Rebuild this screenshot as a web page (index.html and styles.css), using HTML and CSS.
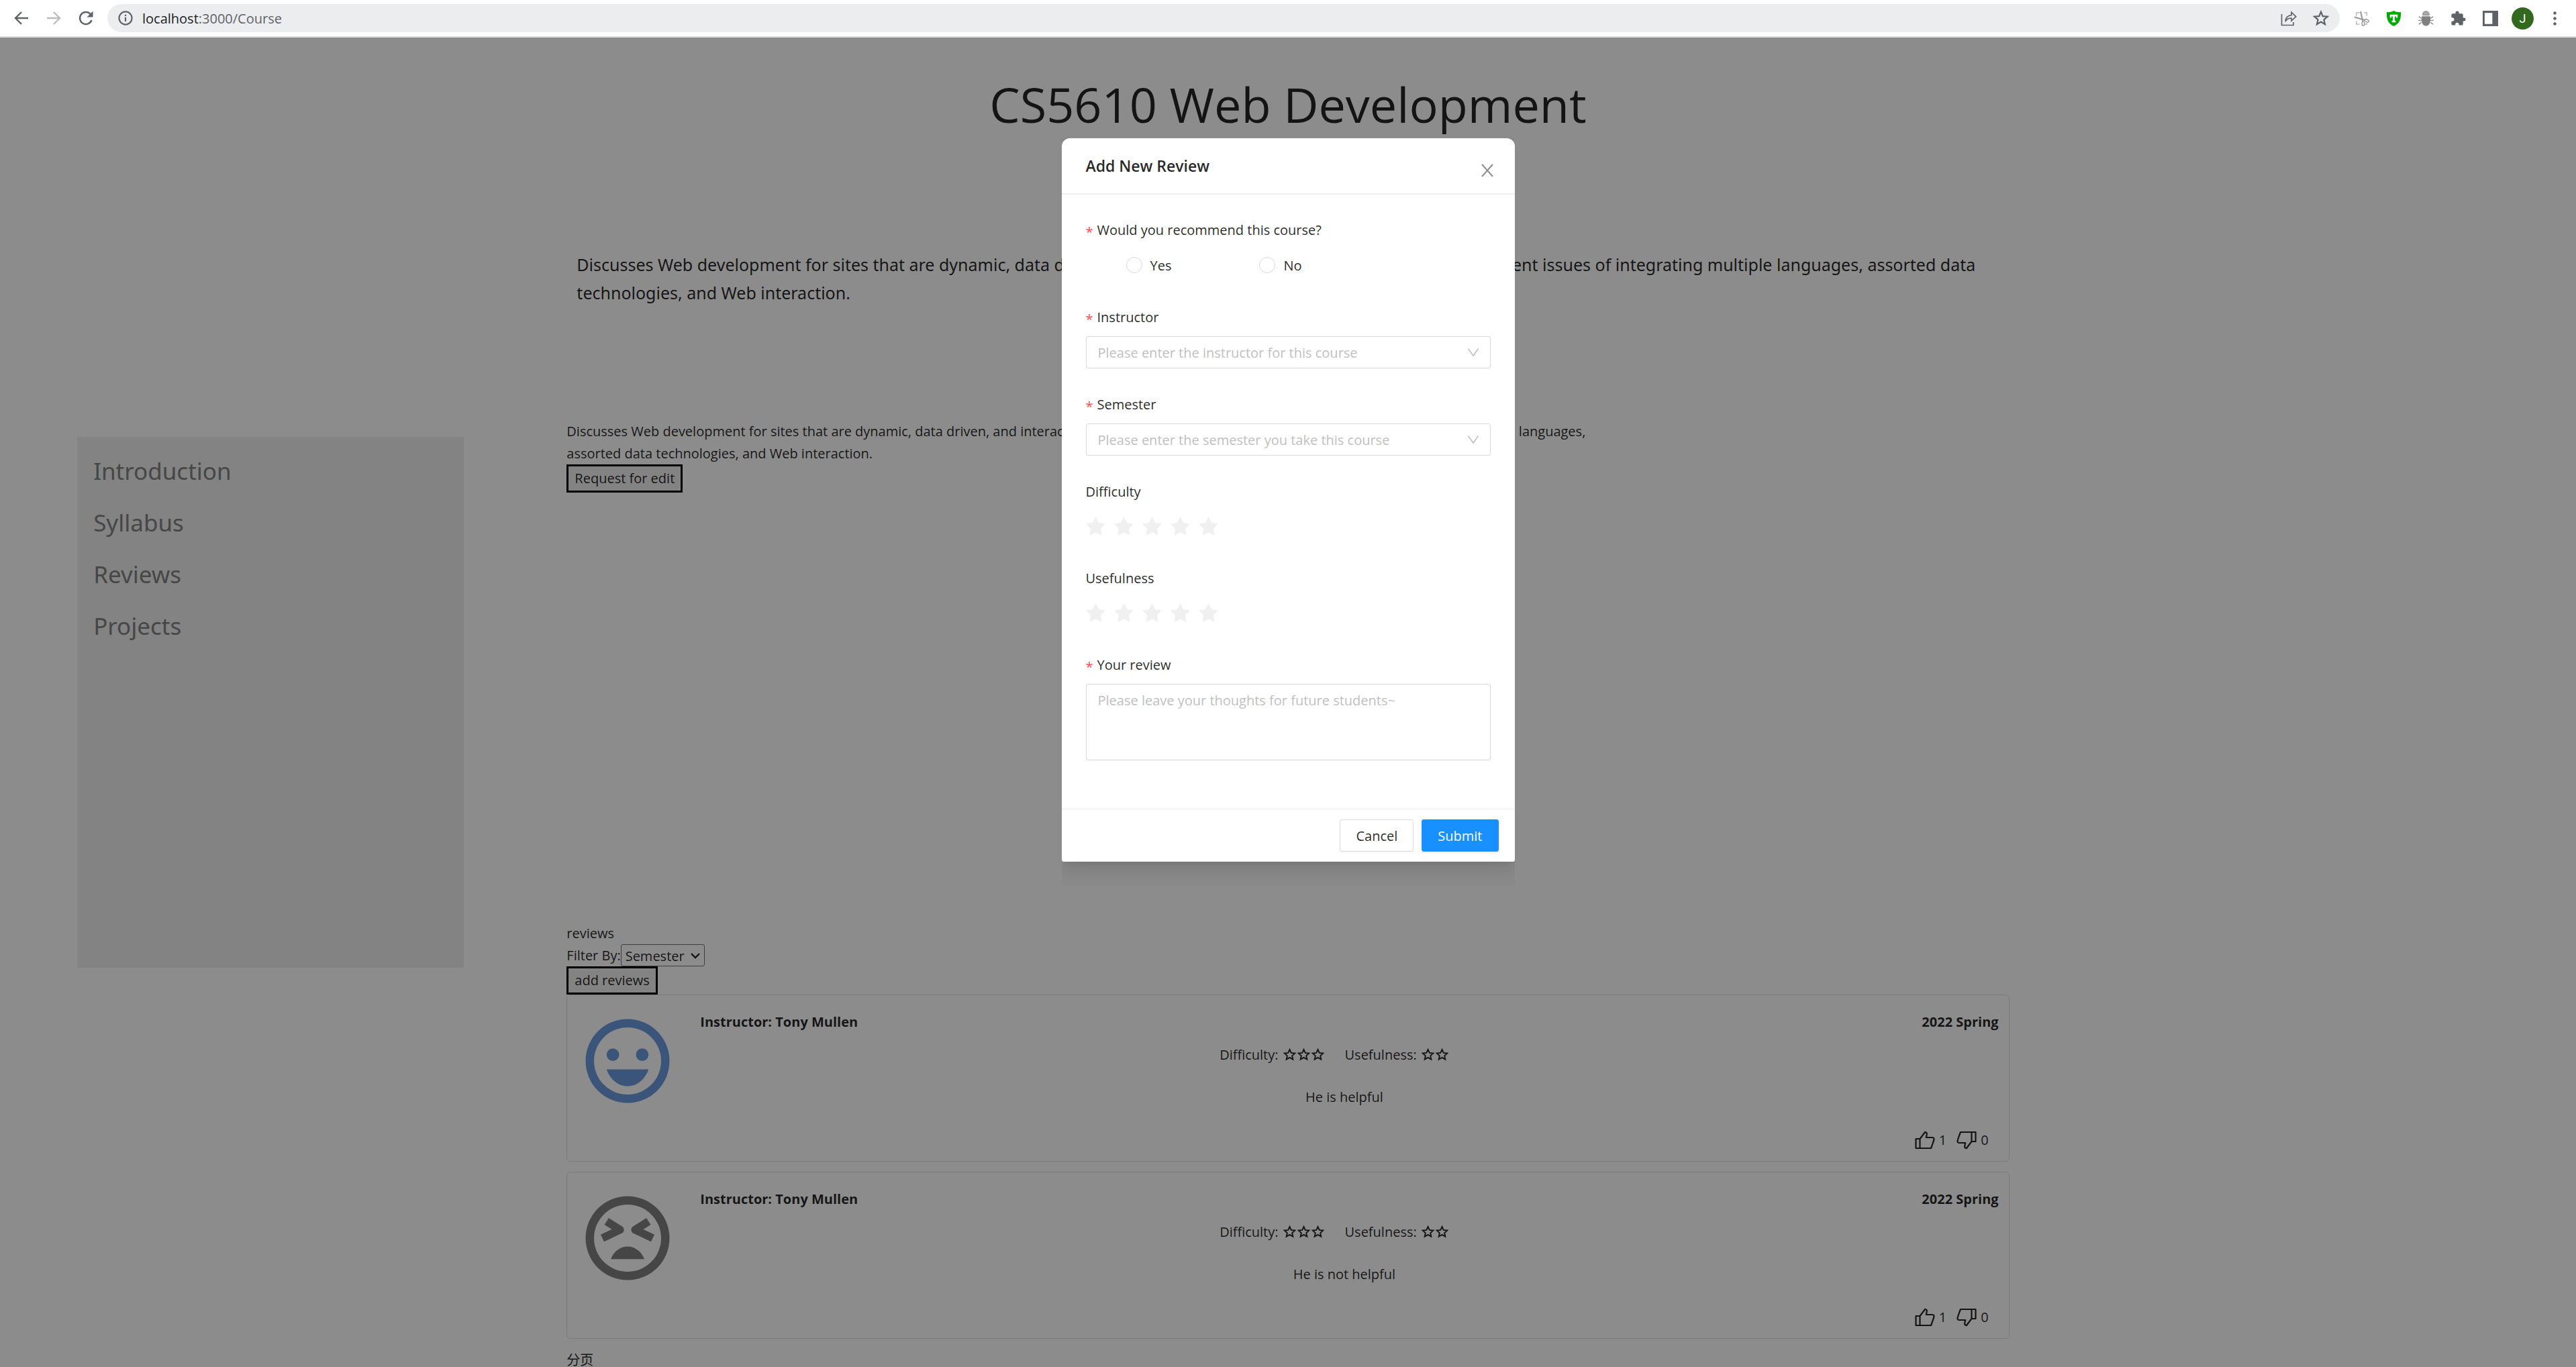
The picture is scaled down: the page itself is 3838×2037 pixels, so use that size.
FILE: index.html
```html
<!DOCTYPE html>
<html lang="en">
<head>
<meta charset="utf-8">
<meta name="viewport" content="width=device-width, initial-scale=1">
<title>CS5610 Web Development</title>
<link rel="stylesheet" href="styles.css">
</head>
<body>
<svg class="defs" aria-hidden="true">
  <symbol id="star-outline" viewBox="0 0 24 24"><path d="M12 3.4l2.6 5.7 6.2.7-4.6 4.2 1.3 6.1-5.5-3.1-5.5 3.1 1.3-6.1-4.6-4.2 6.2-.7z" fill="none" stroke="currentColor" stroke-width="2.2"/></symbol>
  <symbol id="thumb" viewBox="0 0 30 28"><path d="M1.5 12h6v14h-6zM7.500 12L14 3.500c.4-1 .8-1.800 1.700-1.500 1.700.5 2.400 1.500 2.100 3L16.800 10H26c1.700 0 2.700 1 2.500 2.500-.4 3-1.700 6-3 9.500L24 26H7.500" fill="none" stroke="currentColor" stroke-width="2.200" stroke-linejoin="round"/></symbol>
  <symbol id="chevron" viewBox="0 0 18 14"><path d="M1.500 1.500L9 12l7.500-10.500" fill="none" stroke="currentColor" stroke-width="1.600"/></symbol>
</svg>
<div class="window">
  <header class="toolbar">
    <div class="nav">
      <button type="button" class="tool" aria-label="Back"><svg viewBox="0 0 24 24"><path d="M22 12H3M12 3l-9 9 9 9" fill="none" stroke="currentColor" stroke-width="2.400"/></svg></button>
      <button type="button" class="tool off" aria-label="Forward"><svg viewBox="0 0 24 24"><path d="M2 12h19M12 3l9 9-9 9" fill="none" stroke="currentColor" stroke-width="2.400"/></svg></button>
      <button type="button" class="tool" aria-label="Reload"><svg viewBox="0 0 24 24"><path d="M20.500 15A9 9 0 1 1 18.500 5.800" fill="none" stroke="currentColor" stroke-width="2.400"/><path d="M22.500 1.500v9h-9z" fill="currentColor"/></svg></button>
    </div>
    <div class="address">
      <svg class="info" viewBox="0 0 24 24"><circle cx="12" cy="12" r="10.400" fill="none" stroke="currentColor" stroke-width="2.400"/><path d="M12 10.500v7M12 6.200v2.600" stroke="currentColor" stroke-width="2.400"/></svg>
      <span class="url">localhost<span class="path">:3000/Course</span></span>
      <button type="button" class="tool" aria-label="Share"><svg viewBox="0 0 24 24"><path d="M1.500 6v16.500H19V18M7 17c.4-6 3.500-9 9-9.400V3.200l6.800 6.600L16 16v-4c-4 0-7 1.500-9 5z" fill="none" stroke="currentColor" stroke-width="1.700"/></svg></button>
      <button type="button" class="tool" aria-label="Bookmark"><svg viewBox="0 0 24 24"><path d="M12 2.600l2.700 6.500 7 .6-5.300 4.600 1.600 6.900-6-3.700-6 3.700 1.600-6.900-5.300-4.600 7-.6z" fill="none" stroke="currentColor" stroke-width="2.200"/></svg></button>
    </div>
    <div class="extensions">
      <button type="button" class="tool" aria-label="Screen capture"><svg viewBox="0 0 24 24"><path d="M4 8V3h5M16 3h4v5M4 16v5h5M20 19v2h-3" fill="none" stroke="#c4c4c4" stroke-width="1.800"/><path d="M1 10l16 4.500M10.500 1L14 17" stroke="#999" stroke-width="2.200"/><ellipse cx="20" cy="15.500" rx="3.400" ry="2" transform="rotate(25 20 15.500)" fill="none" stroke="#999" stroke-width="1.500"/><ellipse cx="14.500" cy="20" rx="2" ry="3.200" fill="none" stroke="#999" stroke-width="1.500"/></svg></button>
      <button type="button" class="tool" aria-label="Shield"><svg viewBox="0 0 24 24"><path d="M12 0c3 1.800 6.500 2.400 11 2.200.4 9.800-1.500 17.800-11 21.800C2.500 20 .6 12 1 2.200 5.500 2.400 9 1.800 12 0z" fill="#0a0"/><path d="M6 6h12v5h-2.500V8.800h-2v6.700H15V18H9v-2.500h1.500V8.800h-2V11H6z" fill="#fff"/></svg></button>
      <button type="button" class="tool" aria-label="Debugger"><svg viewBox="0 0 24 24"><path d="M1 9l4 3M23 9l-4 3M0 15h24M1 21l4-3M23 21l-4-3" stroke="#8a8a8a" stroke-width="1.500"/><path d="M5.500 8.500h13c1.200 8-.5 15-6.500 15s-7.700-7-6.500-15z" fill="#808080"/><path d="M7 6.800C6.600 2.800 9 .8 12 .8s5.400 2 5 6z" fill="#aaa" stroke="#808080"/></svg></button>
      <button type="button" class="tool" aria-label="Extensions"><svg viewBox="0 0 24 24"><path d="M21 11h-1.500V6.500c0-1.100-.9-2-2-2h-4.300V3.200a2.700 2.700 0 0 0-5.400 0v1.300H3.500c-1.100 0-2 .9-2 2v4.100h1.300a2.900 2.900 0 0 1 0 5.800H1.500v4.100c0 1.100.9 2 2 2h4v-1.300a2.800 2.800 0 0 1 5.600 0v1.300h4.400c1.100 0 2-.9 2-2v-4.300H21a2.600 2.600 0 0 0 0-5.200z" fill="currentColor"/></svg></button>
      <button type="button" class="tool" aria-label="Side panel"><svg viewBox="0 0 24 24"><path d="M0 0h24v24H0zM3 3.500v17h12v-17z" fill="currentColor" fill-rule="evenodd"/></svg></button>
      <button type="button" class="avatar" aria-label="Profile">J</button>
      <button type="button" class="tool" aria-label="Menu"><svg viewBox="0 0 24 24"><circle cx="12" cy="3.600" r="2.400" fill="currentColor"/><circle cx="12" cy="12" r="2.400" fill="currentColor"/><circle cx="12" cy="20.400" r="2.400" fill="currentColor"/></svg></button>
    </div>
  </header>

  <div class="viewport">
    <div class="page">
      <h1 class="course-title">CS5610 Web Development</h1>
      <p class="course-lead">Discusses Web development for sites that are dynamic, data driven, and interactive. Focuses on the software development issues of integrating multiple languages, assorted data technologies, and Web interaction.</p>
      <div class="layout">
        <nav class="sidebar">
          <a href="#introduction">Introduction</a>
          <a href="#syllabus">Syllabus</a>
          <a href="#reviews">Reviews</a>
          <a href="#projects">Projects</a>
        </nav>
        <main>
          <section class="intro" id="introduction">
            <p>Discusses Web development for sites that are dynamic, data driven, and interactive. Focuses on the software development issues of integrating multiple languages, assorted data technologies, and Web interaction.</p>
            <button type="button" class="plain-button">Request for edit</button>
          </section>
          <section id="reviews">
            <p>reviews</p>
            <div class="filter">
              <label for="filter">Filter By:</label>
              <span class="filter-box">
                <select id="filter"><option>Semester</option></select>
                <svg viewBox="0 0 16 10"><path d="M2 2l6 6 6-6" fill="none" stroke="currentColor" stroke-width="2.400"/></svg>
              </span>
            </div>
            <button type="button" class="plain-button">add reviews</button>
            <article class="review">
              <svg class="face happy" viewBox="0 0 24 24" fill="currentColor"><path d="M12 2a10 10 0 1 0 0 20 10 10 0 0 0 0-20zm0 18a8 8 0 1 1 0-16 8 8 0 0 1 0 16z"/><circle cx="8.500" cy="10.500" r="1.500"/><circle cx="15.500" cy="10.500" r="1.500"/><path d="M7 14h10c-.8 2.340-2.700 4-5 4s-4.200-1.660-5-4z"/></svg>
              <div class="review-body">
                <div class="review-head"><strong>Instructor: Tony Mullen</strong><strong>2022 Spring</strong></div>
                <div class="scores">
                  <span class="score">Difficulty: <span class="stars"><svg><use href="#star-outline"/></svg><svg><use href="#star-outline"/></svg><svg><use href="#star-outline"/></svg></span></span>
                  <span class="score">Usefulness: <span class="stars"><svg><use href="#star-outline"/></svg><svg><use href="#star-outline"/></svg></span></span>
                </div>
                <p class="comment">He is helpful</p>
                <div class="votes">
                  <button type="button" class="vote"><svg class="up"><use href="#thumb"/></svg>1</button>
                  <button type="button" class="vote"><svg class="down"><use href="#thumb"/></svg>0</button>
                </div>
              </div>
            </article>
            <article class="review">
              <svg class="face sad" viewBox="0 0 24 24" fill="currentColor"><path d="M12 2a10 10 0 1 0 0 20 10 10 0 0 0 0-20zm0 18a8 8 0 1 1 0-16 8 8 0 0 1 0 16z"/><path d="M8 17h8c-.7-1.800-2.200-3-4-3s-3.300 1.200-4 3z"/><path d="M7 8l3.200 2L6 12M17 8l-3.200 2 4.200 2" fill="none" stroke="currentColor" stroke-width="1.900" stroke-linejoin="round"/></svg>
              <div class="review-body">
                <div class="review-head"><strong>Instructor: Tony Mullen</strong><strong>2022 Spring</strong></div>
                <div class="scores">
                  <span class="score">Difficulty: <span class="stars"><svg><use href="#star-outline"/></svg><svg><use href="#star-outline"/></svg><svg><use href="#star-outline"/></svg></span></span>
                  <span class="score">Usefulness: <span class="stars"><svg><use href="#star-outline"/></svg><svg><use href="#star-outline"/></svg></span></span>
                </div>
                <p class="comment">He is not helpful</p>
                <div class="votes">
                  <button type="button" class="vote"><svg class="up"><use href="#thumb"/></svg>1</button>
                  <button type="button" class="vote"><svg class="down"><use href="#thumb"/></svg>0</button>
                </div>
              </div>
            </article>
            <p lang="zh">分页</p>
          </section>
        </main>
      </div>
    </div>

    <div class="mask">
      <div class="modal-clip">
        <form class="modal" role="dialog" aria-labelledby="modal-title">
          <div class="modal-header">
            <h2 id="modal-title">Add New Review</h2>
            <button type="button" class="close" aria-label="Close"><svg viewBox="0 0 20 20"><path d="M2 1l16 18M18 1L2 19" stroke="currentColor" stroke-width="2"/></svg></button>
          </div>
          <div class="modal-body">
            <fieldset class="item">
              <legend class="label required">Would you recommend this course?</legend>
              <div class="choices">
                <label><input type="radio" name="recommend" value="yes">Yes</label>
                <label><input type="radio" name="recommend" value="no">No</label>
              </div>
            </fieldset>
            <div class="item">
              <label class="label required" for="instructor">Instructor</label>
              <div class="select-box">
                <select id="instructor"><option>Please enter the instructor for this course</option></select>
                <svg><use href="#chevron"/></svg>
              </div>
            </div>
            <div class="item">
              <label class="label required" for="semester">Semester</label>
              <div class="select-box">
                <select id="semester"><option>Please enter the semester you take this course</option></select>
                <svg><use href="#chevron"/></svg>
              </div>
            </div>
            <fieldset class="item">
              <legend class="label">Difficulty</legend>
              <div class="rate">
                <input type="radio" name="difficulty" aria-label="1 star"><input type="radio" name="difficulty" aria-label="2 stars"><input type="radio" name="difficulty" aria-label="3 stars"><input type="radio" name="difficulty" aria-label="4 stars"><input type="radio" name="difficulty" aria-label="5 stars">
              </div>
            </fieldset>
            <fieldset class="item">
              <legend class="label">Usefulness</legend>
              <div class="rate">
                <input type="radio" name="usefulness" aria-label="1 star"><input type="radio" name="usefulness" aria-label="2 stars"><input type="radio" name="usefulness" aria-label="3 stars"><input type="radio" name="usefulness" aria-label="4 stars"><input type="radio" name="usefulness" aria-label="5 stars">
              </div>
            </fieldset>
            <div class="item">
              <label class="label required" for="review">Your review</label>
              <textarea id="review" placeholder="Please leave your thoughts for future students~"></textarea>
            </div>
          </div>
          <div class="modal-footer">
            <button type="button" class="btn">Cancel</button>
            <button type="submit" class="btn primary">Submit</button>
          </div>
        </form>
      </div>
    </div>
  </div>
</div>
</body>
</html>
```
FILE: styles.css
```css
* { box-sizing: border-box; }

body {
  margin: 0;
  background: #fff;
  color: rgba(0, 0, 0, 0.85);
  font: 20px/33px "Open Sans", "Noto Sans CJK SC", sans-serif;
}

h1, h2, p { margin: 0; font-weight: 400; }

button, select, textarea, input { font: inherit; color: inherit; margin: 0; }

svg { display: block; flex: none; }

.defs { display: none; }

.window {
  display: flex;
  flex-direction: column;
  height: 100vh;
}

/* Browser toolbar */
.toolbar {
  display: flex;
  align-items: center;
  flex: none;
  height: 56px;
  padding: 0 20px;
  border-bottom: 2px solid #dadce0;
  color: #5f6368;
}

.nav { display: flex; gap: 24px; margin-right: 20px; }

.tool {
  display: flex;
  padding: 0;
  border: 0;
  background: none;
  color: inherit;
}

.tool svg { width: 24px; height: 24px; }

.off { color: #babcbe; }

.address {
  display: flex;
  align-items: center;
  flex: 1;
  gap: 24px;
  height: 42px;
  padding: 0 16px;
  border-radius: 21px;
  background: #ebedef;
}

.info { width: 22px; height: 22px; }

.url { flex: 1; margin-left: -10px; color: #202124; }

.path { color: #5f6368; }

.extensions { display: flex; align-items: center; gap: 25px; margin-left: 21px; }

.extensions .tool svg { width: 23px; height: 23px; }

.avatar {
  width: 33px;
  height: 33px;
  margin: 0 -5px;
  padding: 0;
  border: 0;
  border-radius: 50%;
  background: #33691e;
  color: #fff;
  font: 18px/33px Roboto, sans-serif;
}

/* Course page */
.viewport {
  position: relative;
  flex: 1;
  min-height: 0;
  overflow: hidden;
}

.page { padding-top: 40px; }

.course-title {
  font-size: 72px;
  line-height: 118px;
  text-align: center;
}

.course-lead {
  width: 56vw;
  margin: 159px auto 169px;
  padding: 0 15px;
  font-family: "Noto Sans", sans-serif;
  font-size: 25px;
  line-height: 42px;
}

.layout {
  display: grid;
  grid-template-columns: 15vw 56vw;
  column-gap: 4vw;
  margin-left: 3vw;
}

.sidebar {
  display: flex;
  flex-direction: column;
  align-self: start;
  height: 791px;
  margin-top: 25px;
  padding: 12px 24px;
  background: #eee;
}

.sidebar a {
  color: #818181;
  font-family: "Noto Sans", sans-serif;
  font-size: 35px;
  line-height: 77px;
  text-decoration: none;
}

.intro { min-height: 748px; }

.intro p { width: 71%; }

.plain-button {
  display: block;
  height: 42px;
  padding: 0 9px;
  border: 3px solid #000;
  background: #efefef;
  line-height: 36px;
}

.filter { display: flex; }

.filter-box { display: grid; align-items: center; }

.filter-box select {
  grid-area: 1 / 1;
  height: 33px;
  padding: 0 28px 0 6px;
  border: 1px solid #767676;
  border-radius: 3px;
  background: #fff;
  appearance: none;
}

.filter-box svg {
  grid-area: 1 / 1;
  justify-self: end;
  width: 16px;
  height: 10px;
  margin-right: 6px;
  pointer-events: none;
}

.review {
  display: flex;
  gap: 18px;
  margin-bottom: 15px;
  padding: 23px 15px 15px;
  border: 1px solid rgba(0, 0, 0, 0.125);
  border-radius: 6px;
}

.face { width: 150px; height: 150px; }
.happy { color: #6c9bdf; }
.sad { color: #808080; }

.review-body {
  display: flex;
  flex-direction: column;
  flex: 1;
}

.review-head {
  display: flex;
  justify-content: space-between;
  padding-left: 15px;
}

.scores {
  display: flex;
  justify-content: center;
  margin-top: 16px;
}

.score {
  display: flex;
  align-items: center;
  gap: 6px;
  margin-right: 30px;
}

.stars { display: flex; }
.stars svg { width: 21px; height: 21px; }

.comment { margin-top: 30px; text-align: center; }

.votes {
  display: flex;
  justify-content: flex-end;
  gap: 15px;
  margin-top: 31px;
  padding-right: 15px;
}

.vote {
  display: flex;
  align-items: center;
  gap: 6px;
  padding: 0;
  border: 0;
  background: none;
}

.vote svg { width: 30px; height: 28px; }
.down { transform: rotate(180deg); }

/* Dialog */
.mask {
  position: absolute;
  inset: 0;
  display: flex;
  justify-content: center;
  align-items: flex-start;
  padding-top: 150px;
  background: rgba(0, 0, 0, 0.45);
}

.modal-clip {
  width: 675px;
  padding-bottom: 36px;
  overflow: hidden;
}

.modal {
  border-radius: 12px 12px 3px 3px;
  background: #fff;
  box-shadow: 0 5px 9px -6px rgba(0, 0, 0, 0.12), 0 9px 24px rgba(0, 0, 0, 0.08), 0 14px 42px 12px rgba(0, 0, 0, 0.05);
}

.modal-header {
  display: flex;
  justify-content: space-between;
  padding: 24px 31px 24px 36px;
  border-bottom: 2px solid #f0f0f0;
}

.modal-header h2 {
  font-size: 23px;
  font-weight: 600;
  line-height: 34px;
}

.close {
  align-self: flex-end;
  padding: 0;
  border: 0;
  background: none;
  color: rgba(0, 0, 0, 0.45);
}

.close svg { width: 20px; height: 20px; }

.modal-body { padding: 36px; }

.item {
  min-width: 0;
  margin: 0 0 37px;
  padding: 0;
  border: 0;
}

.item:last-child { margin-bottom: 36px; }

.label {
  display: flex;
  gap: 6px;
  margin-bottom: 12px;
  padding: 0;
}

.required::before {
  content: "*";
  color: #ff4d4f;
  line-height: 40px;
  height: 33px;
}

.choices {
  display: flex;
  align-items: center;
  gap: 131px;
  height: 48px;
  padding-left: 60px;
}

.choices label { display: flex; align-items: center; gap: 12px; }

.choices input {
  width: 24px;
  height: 24px;
  border: 1px solid #d9d9d9;
  border-radius: 50%;
  background: #fff;
  appearance: none;
}

.select-box { display: grid; align-items: center; }

.select-box select,
.item textarea {
  width: 100%;
  height: 48px;
  padding: 0 17px;
  border: 1px solid #d9d9d9;
  border-radius: 3px;
  background: #fff;
  color: #bfbfbf;
  appearance: none;
}

.select-box select { grid-area: 1 / 1; }

.select-box svg {
  grid-area: 1 / 1;
  justify-self: end;
  width: 18px;
  height: 14px;
  margin-right: 17px;
  color: #bfbfbf;
  pointer-events: none;
}

.item textarea {
  display: block;
  height: 114px;
  padding: 7px 17px;
  resize: none;
}

.item textarea::placeholder { color: #bfbfbf; }

.rate {
  display: flex;
  align-items: center;
  gap: 12px;
  height: 47px;
}

.rate input {
  width: 30px;
  height: 30px;
  background: #f0f0f0;
  clip-path: polygon(50% 2%, 66% 32%, 98% 37%, 75% 61%, 80% 95%, 50% 79%, 20% 95%, 25% 61%, 2% 37%, 34% 32%);
  appearance: none;
}

.modal-footer {
  display: flex;
  justify-content: flex-end;
  gap: 12px;
  padding: 15px 24px;
  border-top: 1px solid #f0f0f0;
}

.btn {
  height: 48px;
  padding: 0 23px;
  border: 1px solid #d9d9d9;
  border-radius: 3px;
  background: #fff;
  box-shadow: 0 3px 0 rgba(0, 0, 0, 0.02);
}

.primary {
  border-color: #1890ff;
  background: #1890ff;
  box-shadow: 0 3px 0 rgba(0, 0, 0, 0.04);
  color: #fff;
}
```
